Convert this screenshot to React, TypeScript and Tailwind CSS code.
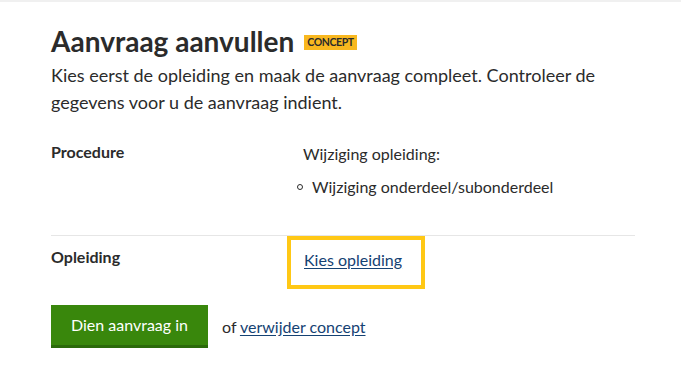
export default function App() {
  return (
    <div className="min-h-[369px] bg-white border-t-2 border-[#f0f0f0] text-[#2b2b2b]" style={{ fontFamily: 'Lato, "Noto Sans", sans-serif' }}>
      <div className="pl-[51px] pr-[46px] pt-[21px]">
        <div className="flex items-center gap-[10px]">
          <h1 className="text-[28px] font-bold leading-[36px]">Aanvraag aanvullen</h1>
          <span className="bg-[#f9b81f] text-[#2b2b2b] text-[10.5px] font-bold leading-[15px] px-[3px] mt-[2px] tracking-[-0.4px]">CONCEPT</span>
        </div>
        <p className="text-[18px] leading-[27px] mt-[3px]">
          Kies eerst de opleiding en maak de aanvraag compleet. Controleer de gegevens voor u de aanvraag indient.
        </p>
        <dl className="mt-[22px]">
          <div className="grid grid-cols-[236px_1fr] border-b border-[#e6e6e6] pb-[36px]">
            <dt className="text-[16px] font-bold leading-[24px] pt-[2px]">Procedure</dt>
            <dd className="pl-[16px] text-[16px] leading-[24px] pt-[4px]">
              <p>Wijziging opleiding:</p>
              <ul className="mt-[9px]">
                <li className="flex items-center gap-[9px]">
                  <span className="w-[6px] h-[6px] rounded-full border border-[#2b2b2b] ml-[-6px]" />
                  Wijziging onderdeel/subonderdeel
                </li>
              </ul>
            </dd>
          </div>
          <div className="grid grid-cols-[236px_1fr]">
            <dt className="text-[16px] font-bold leading-[24px] pt-[9px]">Opleiding</dt>
            <dd className="flex">
              <div className="border-4 border-[#ffc815] w-[138px] h-[53px] pl-[13px] pb-[6px] flex items-center">
                <a href="#" className="text-[16px] leading-[24px] text-[#154273] underline underline-offset-2">Kies opleiding</a>
              </div>
            </dd>
          </div>
        </dl>
        <div className="flex items-center gap-[14px] mt-[16px]">
          <button className="bg-[#39870c] border-b-[3px] border-[#2b6a0a] text-white text-[16px] h-[43px] w-[157px]">Dien aanvraag in</button>
          <span className="text-[16px]">
            of <a href="#" className="text-[#154273] underline underline-offset-2">verwijder concept</a>
          </span>
        </div>
      </div>
    </div>
  );
}
